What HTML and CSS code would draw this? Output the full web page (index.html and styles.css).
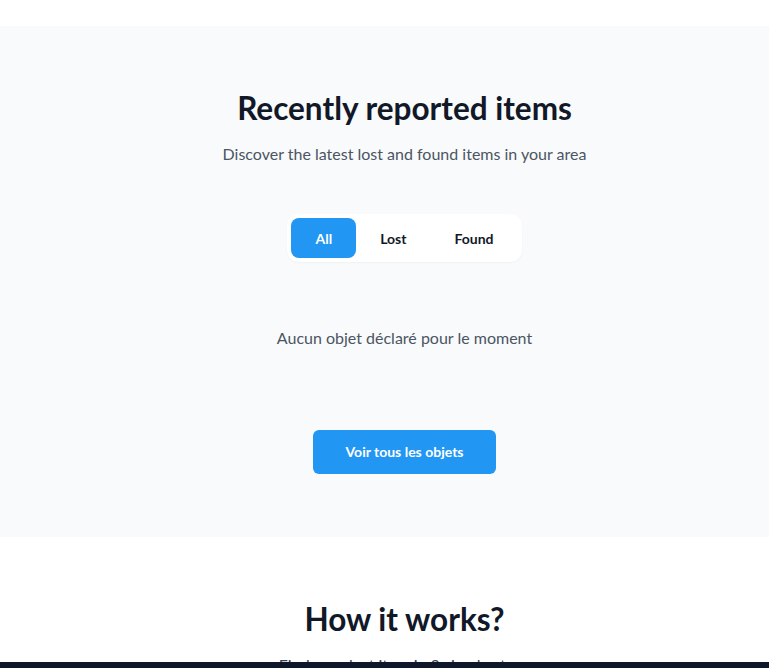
FILE: index.html
```html
<!DOCTYPE html>
<html lang="fr">
<head>
<meta charset="utf-8">
<title>Recently reported items</title>
<link rel="stylesheet" href="styles.css">
</head>
<body>
<div class="top-spacer"></div>
<section class="recent">
  <h2 class="title">Recently reported items</h2>
  <p class="subtitle">Discover the latest lost and found items in your area</p>
  <div class="tabs-wrap">
    <div class="tabs">
      <button class="tab active">All</button>
      <button class="tab">Lost</button>
      <button class="tab">Found</button>
    </div>
  </div>
  <p class="empty">Aucun objet déclaré pour le moment</p>
  <div class="cta-wrap">
    <a class="cta" href="#">Voir tous les objets</a>
  </div>
</section>
<section class="how">
  <h2 class="title">How it works?</h2>
  <p class="subtitle dark">Find your lost item in 3 simple steps</p>
</section>
<div class="bottom-bar"></div>
</body>
</html>
```

FILE: styles.css
```css
* { box-sizing: border-box; }
html, body { margin: 0; padding: 0; }
body {
  font-family: "Lato", "Noto Sans", sans-serif;
  background: #ffffff;
  color: #111827;
  overflow: hidden;
}
.top-spacer { height: 26px; background: #ffffff; }
.recent {
  background: #f9fafb;
  padding: 64px 16px 63px 56px;
  text-align: center;
}
.title {
  margin: 0;
  font-size: 31.5px;
  line-height: 36px;
  font-weight: 700;
  color: #111827;
}
.subtitle {
  margin: 16px 0 0;
  font-size: 16px;
  line-height: 24px;
  color: #4b5563;
}
.subtitle.dark { color: #374151; }
.tabs-wrap {
  margin-top: 48px;
  display: flex;
  justify-content: center;
}
.tabs {
  display: flex;
  background: #ffffff;
  border-radius: 12px;
  padding: 4px;
  box-shadow: 0 1px 2px rgba(0,0,0,0.04);
}
.tab {
  border: 0;
  background: transparent;
  font-family: inherit;
  font-size: 14px;
  font-weight: 700;
  color: #111827;
  height: 40px;
  padding: 0 24px;
  border-radius: 8px;
  cursor: pointer;
}
.tab.active { background: #2196f3; color: #ffffff; }
.empty {
  margin: 64px 0 0;
  font-size: 16px;
  line-height: 24px;
  color: #4b5563;
}
.cta-wrap {
  margin-top: 80px;
  display: flex;
  justify-content: center;
}
.cta {
  display: inline-block;
  background: #2196f3;
  color: #ffffff;
  text-decoration: none;
  font-size: 14px;
  font-weight: 700;
  line-height: 20px;
  padding: 12px 32px;
  border-radius: 6px;
}
.how {
  padding: 64px 16px 64px 56px;
  text-align: center;
}
.bottom-bar {
  position: fixed;
  left: 0;
  right: 0;
  bottom: 0;
  height: 6px;
  background: #0f172a;
}
```
